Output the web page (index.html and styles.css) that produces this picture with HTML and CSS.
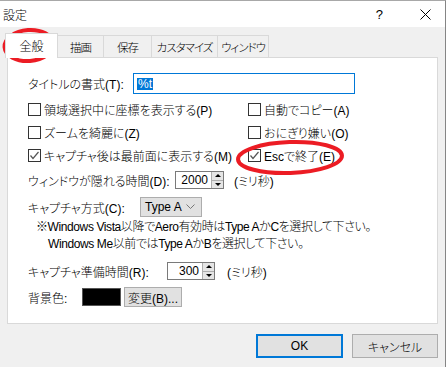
FILE: index.html
```html
<!DOCTYPE html>
<html>

<head>
    <meta charset="utf-8">
    <link rel="stylesheet" href="styles.css">
</head>

<body>
    <main class="dialog">
        <header class="titlebar">
            <span class="title">設定</span>
            <span class="help">?</span>
            <span class="close">
                <svg width="11" height="11" viewBox="0 0 11 11">
                    <path d="M0.5 0.5 L10.5 10.5 M10.5 0.5 L0.5 10.5" stroke="#000" stroke-width="1" fill="none" />
                </svg>
            </span>
        </header>
        <div class="content">
            <!-- tabs -->
            <nav class="tabs">
                <div class="tab active">全般</div>
                <div class="tab w46">描画</div>
                <div class="tab w48">保存</div>
                <div class="tab w66">カスタマイズ</div>
                <div class="tab w51 last">ウィンドウ</div>
            </nav>
            <section class="panel">
                <div class="row title-row">
                    <span class="lbl l105">タイトルの書式(T):</span>
                    <div class="textbox"><span class="sel">%t</span></div>
                </div>
                <div class="checks">
                    <label class="check"><span class="box"></span>領域選択中に座標を表示する(P)</label>
                    <label class="check"><span class="box"></span>自動でコピー(A)</label>
                    <label class="check"><span class="box"></span>ズームを綺麗に(Z)</label>
                    <label class="check"><span class="box"></span>おにぎり嫌い(O)</label>
                    <label class="check"><span class="box checked"><svg width="11" height="11" viewBox="0 0 11 11"><path d="M1.5 5.5 L4 8.5 L9.5 2" stroke="#555" stroke-width="1.2" fill="none" /></svg></span>キャプチャ後は最前面に表示する(M)</label>
                    <label class="check"><span class="box checked"><svg width="11" height="11" viewBox="0 0 11 11"><path d="M1.5 5.5 L4 8.5 L9.5 2" stroke="#555" stroke-width="1.2" fill="none" /></svg></span>Escで終了(E)</label>
                </div>
                <div class="row hide-row">
                    <span class="lbl l147">ウィンドウが隠れる時間(D):</span>
                    <div class="spin w49">
                        <span class="spin-val">2000</span>
                        <span class="spin-arrows"><span class="up"></span><span class="down"></span></span>
                    </div>
                    <span class="unit">(ミリ秒)</span>
                </div>
                <div class="row method-row">
                    <span class="lbl l112">キャプチャ方式(C):</span>
                    <div class="combo">
                        <span>Type A</span>
                        <svg width="9" height="6" viewBox="0 0 9 6"><path d="M0.5 0.5 L4.5 4.5 L8.5 0.5" stroke="#777" stroke-width="1" fill="none" /></svg>
                    </div>
                </div>
                <p class="note first">※Windows Vista以降でAero有効時はType AかCを選択して下さい。</p>
                <p class="note second">Windows Me以前ではType AかBを選択して下さい。</p>
                <div class="row prep-row">
                    <span class="lbl l139">キャプチャ準備時間(R):</span>
                    <div class="spin w48">
                        <span class="spin-val">300</span>
                        <span class="spin-arrows"><span class="up"></span><span class="down"></span></span>
                    </div>
                    <span class="unit">(ミリ秒)</span>
                </div>
                <div class="row bg-row">
                    <span class="lbl l54">背景色:</span>
                    <span class="swatch"></span>
                    <button class="small-btn">変更(B)...</button>
                </div>
            </section>
            <div class="buttons">
                <button class="btn default">OK</button>
                <button class="btn">キャンセル</button>
            </div>
        </div>
        <!-- red marks drawn over the screenshot -->
        <svg class="marks" width="448" height="367" viewBox="0 0 448 367">
            <ellipse cx="29" cy="45.5" rx="24.5" ry="15.5" transform="rotate(-4 29 45.5)" />
            <ellipse cx="290" cy="157.5" rx="52" ry="15.5" transform="rotate(-2 290 157.5)" />
        </svg>
    </main>
</body>

</html>
```

FILE: styles.css
```css
* {
    margin: 0;
    padding: 0;
    box-sizing: border-box;
}

body {
    background-color: #fff;
    font-family: "Liberation Sans", "Noto Sans CJK JP", sans-serif;
    font-size: 12px;
    font-weight: 300;
    color: #000;
    font-feature-settings: "palt";
}

.dialog {
    position: relative;
    width: 446px;
    height: 367px;
    border-top: 1px solid #a8a8a8;
    border-right: 1px solid #858585;
    background-color: #f0f0f0;
    overflow: hidden;
}

/* title bar */
.titlebar {
    height: 26px;
    background-color: #fff;
    display: flex;
    align-items: center;
    padding: 0 14px 0 3px;
}

.title {
    flex: 1;
}

.help {
    font-size: 13px;
    margin-right: 37px;
}

.close {
    display: flex;
    margin-top: 1px;
}

/* tabs */
.content {
    padding: 6px 7px 0 7px;
}

.tabs {
    display: flex;
    align-items: flex-end;
    height: 25px;
    margin-bottom: -1px;
    position: relative;
    z-index: 1;
}

.tab {
    flex-shrink: 0;
    white-space: nowrap;
    height: 22px;
    margin-bottom: 1px;
    border: 1px solid #d9d9d9;
    border-right: none;
    border-bottom: none;
    background-color: #f0f0f0;
    display: flex;
    align-items: center;
    justify-content: center;
    font-size: 11.5px;
    letter-spacing: -1px;
}

.tab.active {
    height: 25px;
    width: 53px;
    margin: 0 -1px 0 -2px;
    border-right: 1px solid #d9d9d9;
    background-color: #fff;
    position: relative;
    z-index: 2;
    padding-bottom: 2px;
    letter-spacing: 0;
    font-size: 12px;
}

.tab.last {
    border-right: 1px solid #d9d9d9;
}

.w46 { width: 46px; }
.w48 { width: 48px; }
.w66 { width: 66px; }
.w51 { width: 52px; }

/* panel */
.panel {
    width: 431px;
    height: 267px;
    background-color: #fff;
    border: 1px solid #d9d9d9;
    padding: 15px 0 0 20px;
}

.row {
    display: flex;
    align-items: center;
    height: 20px;
}

.lbl {
    flex-shrink: 0;
    white-space: nowrap;
}

.l105 { width: 105px; }
.l147 { width: 147px; }
.l112 { width: 112px; }
.l139 { width: 139px; }
.l54 { width: 54px; }

.title-row {
    height: 21px;
}

.textbox {
    width: 222px;
    height: 21px;
    border: 1px solid #0078d7;
    display: flex;
    align-items: center;
    padding-left: 3px;
}

.sel {
    background-color: #0078d7;
    color: #fff;
    font-size: 12px;
    line-height: 12px;
    padding: 0 1px;
}

.checks {
    display: grid;
    grid-template-columns: 220px auto;
    grid-auto-rows: 23px;
    margin-top: 4px;
}

.check {
    display: flex;
    align-items: center;
    white-space: nowrap;
}

.box {
    width: 13px;
    height: 13px;
    border: 1px solid #333;
    background-color: #fff;
    margin-right: 3px;
    display: flex;
    align-items: center;
    justify-content: center;
}

.hide-row {
    margin-top: 3px;
}

.spin {
    height: 18px;
    border: 1px solid #7a7a7a;
    display: flex;
    background-color: #fff;
}

.spin.w49 { width: 49px; }
.spin.w48 { width: 48px; }

.spin-val {
    flex: 1;
    text-align: right;
    padding-right: 3px;
    line-height: 16px;
}

.spin-arrows {
    width: 12px;
    display: flex;
    flex-direction: column;
    border-left: 1px solid #adadad;
}

.up,
.down {
    flex: 1;
    background-color: #e5e5e5;
    display: flex;
    align-items: center;
    justify-content: center;
}

.up {
    border-bottom: 1px solid #adadad;
}

.up::after {
    content: "";
    border-left: 3px solid transparent;
    border-right: 3px solid transparent;
    border-bottom: 3px solid #000;
}

.down::after {
    content: "";
    border-left: 3px solid transparent;
    border-right: 3px solid transparent;
    border-top: 3px solid #000;
}

.unit {
    margin-left: 10px;
}

.method-row {
    margin-top: 7px;
}

.combo {
    width: 62px;
    height: 20px;
    border: 1px solid #adadad;
    background-color: #e1e1e1;
    display: flex;
    align-items: center;
    justify-content: space-between;
    padding: 0 6px 0 4px;
}

.note {
    line-height: 17px;
    white-space: nowrap;
    letter-spacing: -0.4px;
}

.note.first {
    margin-top: 2px;
    padding-left: 8px;
}

.note.second {
    padding-left: 20px;
}

.prep-row {
    margin-top: 8px;
}

.prep-row .unit {
    margin-left: 12px;
}

.bg-row {
    margin-top: 6px;
}

.swatch {
    width: 39px;
    height: 18px;
    background-color: #000;
    border: 1px solid #555;
}

.small-btn {
    margin-left: 3px;
    width: 58px;
    height: 20px;
    border: 1px solid #adadad;
    background-color: #e1e1e1;
    font: inherit;
}

/* dialog buttons */
.buttons {
    display: flex;
    justify-content: flex-end;
    gap: 9px;
    margin-top: 10px;
}

.btn {
    width: 86px;
    height: 24px;
    border: 1px solid #adadad;
    background-color: #e1e1e1;
    font: inherit;
}

.btn.default {
    width: 87px;
    border: 2px solid #0078d7;
}

.marks {
    position: absolute;
    top: -1px;
    left: 0;
    pointer-events: none;
}

.marks ellipse {
    fill: none;
    stroke: #ec1c24;
    stroke-width: 4;
}
```
